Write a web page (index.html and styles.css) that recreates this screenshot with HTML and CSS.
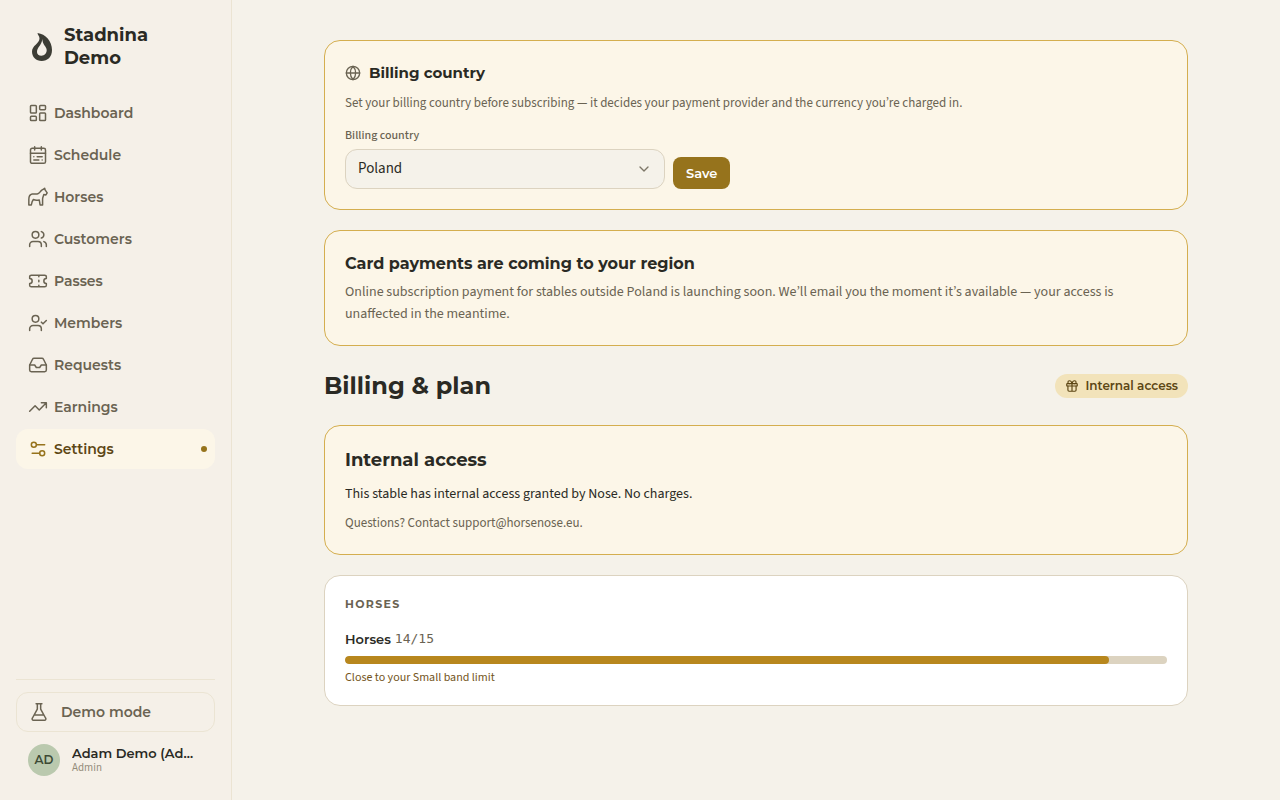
FILE: index.html
```html
<!DOCTYPE html>
<html lang="en">
<head>
<meta charset="utf-8">
<meta name="viewport" content="width=device-width, initial-scale=1">
<title>Billing &amp; plan - Stadnina Demo</title>
<link rel="stylesheet" href="styles.css">
</head>
<body>
	<div class="app">
		<aside class="sidebar">
			<a class="brand" href="#">
				<svg class="brand-logo" viewBox="0 0 20 28"><path fill-rule="evenodd" d="M5.500 0C13.500 1 20 8 20 17C20 24 15.500 28 9.700 28C4 28 0 24 0 18.500C0 12.500 7.500 10.500 7.500 5.500C7.500 3 5.500 2 5.500 0ZM10.300 6C10 12 5 14 5 19C5 21.200 6.800 22.700 9.400 22.700C12.600 22.700 14.700 20.300 14.700 17C14.700 13.500 10.500 12 10.300 6Z"/></svg>
				<span>Stadnina Demo</span>
			</a>
			<nav class="nav">
				<a href="#"><svg class="icon" viewBox="0 0 24 24"><rect x="3" y="3" width="7" height="9" rx="1"/><rect x="14" y="3" width="7" height="5" rx="1"/><rect x="14" y="12" width="7" height="9" rx="1"/><rect x="3" y="16" width="7" height="5" rx="1"/></svg><span>Dashboard</span></a>
				<a href="#"><svg class="icon" viewBox="0 0 24 24"><rect x="3" y="4" width="18" height="18" rx="2"/><path d="M8 2v4M16 2v4M3 10h18M7 14h.01M11 14h6M7 18h6M17 18h.01"/></svg><span>Schedule</span></a>
				<a href="#"><svg class="icon" viewBox="0 0 24 24"><path d="M1 21.500V15C1 11 2 9 5 8.500H11C14 8 14.500 5 17 3.500C18 3 19 2.500 20 1.500L20.500 3.500L23 7L21.500 9.500L19 9C18.500 11 17.500 12.500 17.500 14.500V21.500H14.500L13.500 15.500C10.500 16 8.500 16 6.500 15L5 17.500L4 21.500Z"/></svg><span>Horses</span></a>
				<a href="#"><svg class="icon" viewBox="0 0 24 24"><path d="M16 21v-2a4 4 0 0 0-4-4H6a4 4 0 0 0-4 4v2"/><circle cx="9" cy="7" r="4"/><path d="M22 21v-2a4 4 0 0 0-3-3.870M16 3.130a4 4 0 0 1 0 7.750"/></svg><span>Customers</span></a>
				<a href="#"><svg class="icon" viewBox="0 0 24 24"><path d="M2 9a3 3 0 0 1 0 6v2a2 2 0 0 0 2 2h16a2 2 0 0 0 2-2v-2a3 3 0 0 1 0-6V7a2 2 0 0 0-2-2H4a2 2 0 0 0-2 2ZM13 5v2M13 17v2M13 11v2"/></svg><span>Passes</span></a>
				<a href="#"><svg class="icon" viewBox="0 0 24 24"><path d="M16 21v-2a4 4 0 0 0-4-4H6a4 4 0 0 0-4 4v2"/><circle cx="9" cy="7" r="4"/><path d="m16 11 2 2 4-4"/></svg><span>Members</span></a>
				<a href="#"><svg class="icon" viewBox="0 0 24 24"><path d="M22 12h-6l-2 3h-4l-2-3H2"/><path d="M5.450 5.110 2 12v6a2 2 0 0 0 2 2h16a2 2 0 0 0 2-2v-6l-3.450-6.890A2 2 0 0 0 16.760 4H7.240a2 2 0 0 0-1.790 1.110z"/></svg><span>Requests</span></a>
				<a href="#"><svg class="icon" viewBox="0 0 24 24"><path d="M22 7 13.500 15.500 8.500 10.500 2 17M16 7h6v6"/></svg><span>Earnings</span></a>
				<a href="#" class="active" aria-current="page"><svg class="icon" viewBox="0 0 24 24"><path d="M20 7h-9M14 17H5"/><circle cx="17" cy="17" r="3"/><circle cx="7" cy="7" r="3"/></svg><span>Settings</span><i class="dot"></i></a>
			</nav>
			<div class="sidebar-footer">
				<button type="button" class="demo-mode"><svg class="icon" viewBox="0 0 24 24"><path d="M10 2v6.500L4 19.500A1.600 1.600 0 0 0 5.500 22h13a1.600 1.600 0 0 0 1.500-2.500L14 8.500V2M8.500 2h7M7 15.500h10"/></svg><span>Demo mode</span></button>
				<div class="user">
					<span class="avatar">AD</span>
					<div class="user-text">
						<div class="user-name">Adam Demo (Adam Demo)</div>
						<div class="user-role">Admin</div>
					</div>
				</div>
			</div>
		</aside>

		<main class="main">
			<div class="content">
				<section class="card card-gold">
					<h2 class="country-title"><svg class="icon" viewBox="0 0 24 24"><circle cx="12" cy="12" r="10"/><path d="M12 2a14.500 14.500 0 0 0 0 20 14.500 14.500 0 0 0 0-20M2 12h20"/></svg>Billing country</h2>
					<p class="country-text">Set your billing country before subscribing — it decides your payment provider and the currency you’re charged in.</p>
					<form class="country-form">
						<div class="field">
							<label for="country">Billing country</label>
							<div class="select">
								<select id="country">
									<option>Poland</option>
								</select>
								<svg class="icon" viewBox="0 0 24 24"><path d="m6 9 6 6 6-6"/></svg>
							</div>
						</div>
						<button type="button" class="save">Save</button>
					</form>
				</section>

				<section class="card card-gold">
					<h2 class="region-title">Card payments are coming to your region</h2>
					<p class="region-text">Online subscription payment for stables outside Poland is launching soon. We’ll email you the moment it’s available — your access is unaffected in the meantime.</p>
				</section>

				<header class="page-header">
					<h1>Billing &amp; plan</h1>
					<span class="badge"><svg class="icon" viewBox="0 0 24 24"><rect x="3" y="8" width="18" height="4" rx="1"/><path d="M12 8v13M19 12v7a2 2 0 0 1-2 2H7a2 2 0 0 1-2-2v-7M7.500 8a2.500 2.500 0 0 1 0-5C11 3 12 8 12 8s1-5 4.500-5a2.500 2.500 0 0 1 0 5"/></svg>Internal access</span>
				</header>

				<section class="card card-gold">
					<h2 class="access-title">Internal access</h2>
					<p class="access-text">This stable has internal access granted by Nose. No charges.</p>
					<p class="access-help">Questions? Contact support@horsenose.eu.</p>
				</section>

				<section class="card">
					<h3 class="usage-title">Horses</h3>
					<div class="usage-row"><span id="usage-name" class="usage-name">Horses</span> <span class="usage-count">14/15</span></div>
					<div class="bar" role="progressbar" aria-labelledby="usage-name" aria-valuemin="0" aria-valuemax="15" aria-valuenow="14">
						<div class="bar-fill" style="width:93%"></div>
					</div>
					<p class="usage-note">Close to your Small band limit</p>
				</section>
			</div>
		</main>
	</div>
</body>
</html>
```
FILE: styles.css
```css
*{box-sizing: border-box;}
body{
	margin: 0;
	background: #f5f2ea;
	color: #2a2a24;
	font-family: "Source Sans 3", "Source Sans Pro", "Noto Sans CJK KR", "Noto Sans", sans-serif;
	font-size: 14px;
}
h1,h2,h3,p{margin: 0;}
a{color: inherit;text-decoration: none;}
h1,h2,h3,button,.brand,.nav,.badge,.avatar,.user-name,.usage-name{
	font-family: Montserrat, Inter, sans-serif;
}
.icon{
	flex: none;
	width: 20px;
	height: 20px;
	fill: none;
	stroke: currentColor;
	stroke-width: 2;
	stroke-linecap: round;
	stroke-linejoin: round;
}
.app{
	display: flex;
	min-height: 100vh;
}

/* sidebar */
.sidebar{
	position: sticky;
	top: 0;
	display: flex;
	flex: none;
	flex-direction: column;
	width: 232px;
	height: 100vh;
	padding: 24px 16px;
	background: #f5f0e8;
	border-right: 1px solid #ebe4d3;
}
.brand{
	display: flex;
	align-items: center;
	gap: 12px;
	width: 160px;
	padding: 0 0 0 16px;
	font-size: 18px;
	font-weight: 700;
	line-height: 23px;
}
.brand-logo{
	flex: none;
	width: 20px;
	height: 28px;
	fill: #3d3d35;
}
.nav{
	display: flex;
	flex: 1;
	flex-direction: column;
	gap: 2px;
	margin-top: 23px;
	color: #6a6352;
	font-size: 14px;
	font-weight: 600;
}
.nav a{
	display: flex;
	align-items: center;
	gap: 6px;
	height: 40px;
	padding: 0 8px 0 12px;
	border-radius: 12px;
}
.nav .icon,.demo-mode .icon{stroke-width: 1.8;}
.nav .active{
	background: #fcf6e8;
	color: #5c4614;
}
.nav .active .icon{color: #96731c;}
.dot{
	width: 6px;
	height: 6px;
	margin-left: auto;
	border-radius: 50%;
	background: #96731c;
}
.sidebar-footer{
	padding-top: 12px;
	border-top: 1px solid #ebe4d3;
}
.demo-mode{
	display: flex;
	align-items: center;
	gap: 12px;
	width: 100%;
	height: 40px;
	padding: 0 12px;
	border: 1px solid #ebe4d3;
	border-radius: 12px;
	background: none;
	color: #6a6352;
	font-size: 14px;
	font-weight: 600;
}
.user{
	display: flex;
	align-items: center;
	gap: 12px;
	padding: 12px 20px 0 12px;
}
.avatar{
	flex: none;
	width: 32px;
	border-radius: 50%;
	background: #bac9ae;
	color: #3d4a35;
	font-size: 12px;
	font-weight: 600;
	line-height: 32px;
	text-align: center;
}
.user-text{min-width: 0;}
.user-name{
	overflow: hidden;
	font-size: 13px;
	font-weight: 600;
	line-height: 15px;
	text-overflow: ellipsis;
	white-space: nowrap;
}
.user-role{
	color: #948c7a;
	font-size: 11px;
	line-height: 13px;
}

/* content */
.main{
	flex: 1;
	min-width: 0;
	padding: 40px 24px;
}
.content{
	display: flex;
	flex-direction: column;
	gap: 20px;
	max-width: 864px;
	margin: 0 auto;
}
.card{
	padding: 20px;
	border: 1px solid #dcd3c0;
	border-radius: 16px;
	background: #fff;
}
.card-gold{
	border-color: #d4ae4f;
	background: #fcf6e8;
}
.country-title{
	display: flex;
	align-items: center;
	gap: 8px;
	font-size: 15px;
	font-weight: 700;
	line-height: 24px;
}
.country-title .icon{
	width: 16px;
	height: 16px;
	color: #6a6352;
}
.country-text{
	margin-top: 8px;
	color: #6a6352;
	font-size: 13px;
	line-height: 20px;
}
.country-form{
	display: flex;
	align-items: flex-end;
	gap: 8px;
	margin-top: 14px;
}
.field{
	flex: 0 1 320px;
}
.field label{
	display: block;
	margin-bottom: 4px;
	color: #6a6352;
	font-size: 12px;
	font-weight: 500;
	line-height: 18px;
}
.select{position: relative;}
.select select{
	appearance: none;
	width: 100%;
	height: 40px;
	padding: 0 36px 2px 12px;
	border: 1px solid #dcd3c0;
	border-radius: 12px;
	background: #f5f2ea;
	color: #2a2a24;
	font-family: inherit;
	font-size: 15px;
}
.select .icon{
	position: absolute;
	top: 12px;
	right: 13px;
	width: 16px;
	height: 16px;
	color: #7d7768;
	pointer-events: none;
}
.save{
	height: 32px;
	padding: 0 13px;
	border: 0;
	border-radius: 8px;
	background: #96731c;
	color: #fff;
	font-size: 13px;
	font-weight: 600;
}
.region-title{
	font-size: 16px;
	font-weight: 700;
	line-height: 26px;
}
.region-text{
	margin-top: 4px;
	color: #6a6352;
	font-size: 14px;
	line-height: 22px;
}
.page-header{
	display: flex;
	align-items: center;
	justify-content: space-between;
	margin: 4px 0;
}
.page-header h1{
	font-size: 24px;
	font-weight: 700;
	line-height: 31px;
}
.badge{
	display: flex;
	align-items: center;
	gap: 6px;
	height: 24px;
	padding: 0 10px;
	border-radius: 12px;
	background: #f2e3ba;
	color: #5c4614;
	font-size: 12px;
	font-weight: 600;
}
.badge .icon{
	width: 14px;
	height: 14px;
}
.access-title{
	font-size: 18px;
	font-weight: 700;
	line-height: 28px;
}
.access-text{
	margin-top: 8px;
	line-height: 24px;
}
.access-help{
	margin-top: 6px;
	color: #6a6352;
	font-size: 13px;
	line-height: 22px;
}
.usage-title{
	color: #6a6352;
	font-size: 11px;
	font-weight: 700;
	letter-spacing: 0.12em;
	line-height: 16px;
	text-transform: uppercase;
}
.usage-row{
	display: flex;
	align-items: center;
	gap: 4px;
	margin-top: 16px;
	line-height: 22px;
}
.usage-name{
	font-size: 13px;
	font-weight: 600;
}
.usage-count{
	color: #6a6352;
	font-family: "DejaVu Sans Mono", monospace;
	font-size: 13px;
}
.bar{
	overflow: hidden;
	height: 8px;
	margin-top: 6px;
	border-radius: 4px;
	background: #dcd3c0;
}
.bar-fill{
	height: 100%;
	border-radius: 4px;
	background: #b8871d;
}
.usage-note{
	margin-top: 6px;
	color: #73541a;
	font-size: 12px;
	line-height: 15px;
}
```
